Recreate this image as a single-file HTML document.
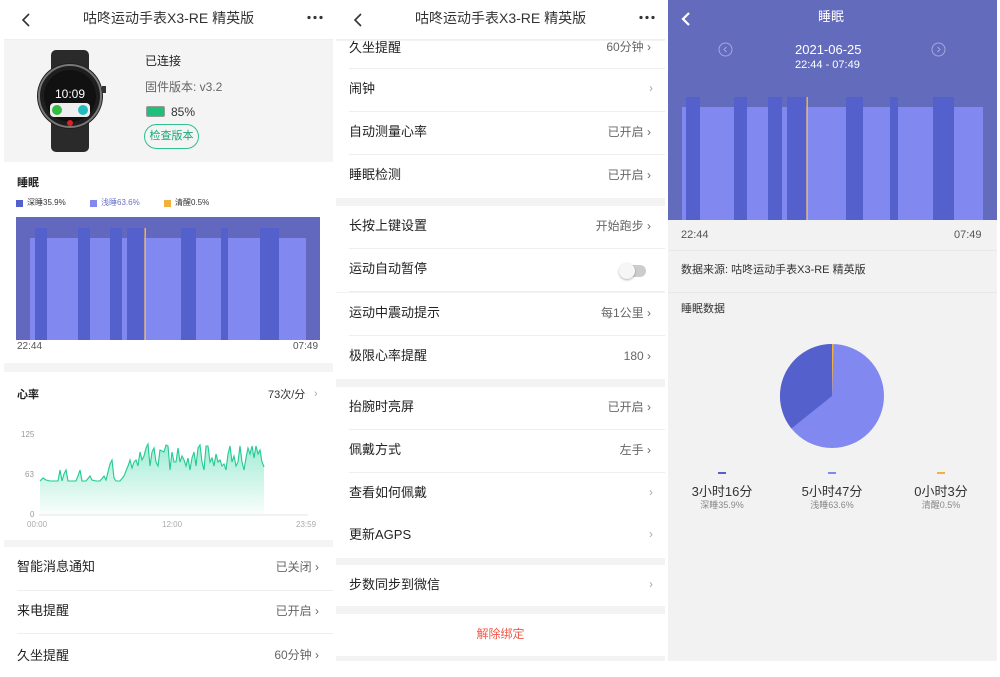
<!DOCTYPE html>
<html><head><meta charset="utf-8"><style>
*{margin:0;padding:0;box-sizing:border-box}
body{width:1000px;height:661px;overflow:hidden;background:#fff;font-family:"Liberation Sans","Noto Sans CJK SC",sans-serif;color:#222;position:relative}
.a{position:absolute}
.t{position:absolute;white-space:nowrap;line-height:1}
.row{position:absolute;height:43px;background:#fff}
.row .l{position:absolute;left:13px;top:13px;font-size:13px;color:#222;line-height:1}
.row .r{position:absolute;right:14px;top:14px;font-size:12px;color:#666;line-height:1}
.row .c{position:absolute;right:12px;top:13px;font-size:12px;color:#aaa;line-height:1}
.row .ln{position:absolute;left:13px;right:0;bottom:0;height:1px;background:#eee}
</style></head><body>

<!-- LEFT PANEL -->
<div class="a" style="left:4px;top:0;width:329px;height:661px;background:#f4f4f4"></div>
<div class="a" style="left:4px;top:0;width:329px;height:40px;background:#fff;border-bottom:1px solid #eee"></div>
<svg class="a" style="left:20px;top:12px" width="12" height="16"><path d="M9 2 L3 8 L9 14" fill="none" stroke="#333" stroke-width="1.6"/></svg>
<div class="t" style="left:83px;top:11px;font-size:14px;color:#333">咕咚运动手表X3-RE 精英版</div>
<svg class="a" style="left:307px;top:15px" width="16" height="5"><circle cx="2" cy="2.5" r="1.6" fill="#333"/><circle cx="8" cy="2.5" r="1.6" fill="#333"/><circle cx="14" cy="2.5" r="1.6" fill="#333"/></svg>
<!-- watch -->
<svg class="a" style="left:30px;top:48px" width="80" height="106">
<rect x="21" y="2" width="38" height="102" rx="5" fill="#2a2a2a"/>
<circle cx="40" cy="48" r="33" fill="#1e1e1e"/>
<circle cx="40" cy="48" r="31" fill="none" stroke="#777" stroke-width="2"/>
<circle cx="40" cy="48" r="26" fill="#111"/>
<rect x="72" y="38" width="4" height="7" fill="#333"/>
<text x="40" y="50" font-size="12" fill="#fff" text-anchor="middle" font-family="Liberation Sans">10:09</text>
<rect x="20" y="55" width="40" height="14" rx="4" fill="#eee"/>
<circle cx="27" cy="62" r="5" fill="#3b4" /><circle cx="53" cy="62" r="5" fill="#2bb"/>
<circle cx="40" cy="75" r="3" fill="#d22"/>
</svg>
<div class="t" style="left:145px;top:55px;font-size:12px;color:#222">已连接</div>
<div class="t" style="left:145px;top:81px;font-size:12px;color:#666">固件版本: v3.2</div>
<div class="a" style="left:146px;top:106px;width:19px;height:11px;border:1px solid #999;border-radius:2px;background:#1fc07a"></div>
<div class="t" style="left:171px;top:106px;font-size:12px;color:#333">85%</div>
<div class="a" style="left:144px;top:124px;width:55px;height:25px;border:1px solid #2fc08d;border-radius:13px;font-size:11px;color:#1aa977;text-align:center;line-height:23px">检查版本</div>
<!-- sleep card -->
<div class="a" style="left:4px;top:162px;width:329px;height:201px;background:#fff"></div>
<div class="t" style="left:17px;top:178px;font-size:11px;font-weight:bold">睡眠</div>
<div class="a" style="left:16px;top:200px;width:7px;height:7px;background:#5461cc"></div>
<div class="t" style="left:27px;top:199px;font-size:8px;color:#333">深睡35.9%</div>
<div class="a" style="left:90px;top:200px;width:7px;height:7px;background:#8189f0"></div>
<div class="t" style="left:101px;top:199px;font-size:8px;color:#6a70c8">浅睡63.6%</div>
<div class="a" style="left:164px;top:200px;width:7px;height:7px;background:#f0b23c"></div>
<div class="t" style="left:175px;top:199px;font-size:8px;color:#333">清醒0.5%</div>
<svg class="a" style="left:16px;top:217px" width="304" height="123">
<rect width="304" height="123" fill="#6368bf"/>
<rect x="14" y="21" width="276" height="102" fill="#8189f0"/>
<g fill="#5461cc"><rect x="19" y="11" width="12" height="112"/><rect x="62" y="11" width="12" height="112"/><rect x="94" y="11" width="12" height="112"/><rect x="111" y="11" width="17" height="112"/><rect x="165" y="11" width="15" height="112"/><rect x="205" y="11" width="7" height="112"/><rect x="244" y="11" width="19" height="112"/></g>
<rect x="128.5" y="11" width="1.5" height="112" fill="#f0b23c"/>
</svg>
<div class="t" style="left:17px;top:342px;font-size:10px;color:#555">22:44</div>
<div class="t" style="left:293px;top:342px;font-size:10px;color:#555">07:49</div>
<!-- heart card -->
<div class="a" style="left:4px;top:372px;width:329px;height:168px;background:#fff"></div>
<div class="t" style="left:17px;top:390px;font-size:11px;font-weight:bold">心率</div>
<div class="t" style="left:268px;top:390px;font-size:11px;color:#333">73次/分</div>
<div class="t" style="left:314px;top:389px;font-size:11px;color:#aaa">›</div>
<div class="t" style="left:21px;top:431px;font-size:8px;color:#999">125</div>
<div class="t" style="left:25px;top:471px;font-size:8px;color:#999">63</div>
<div class="t" style="left:30px;top:511px;font-size:8px;color:#999">0</div>
<div class="t" style="left:27px;top:521px;font-size:8px;color:#aaa">00:00</div>
<div class="t" style="left:162px;top:521px;font-size:8px;color:#aaa">12:00</div>
<div class="t" style="left:296px;top:521px;font-size:8px;color:#aaa">23:59</div>
<svg class="a" style="left:0;top:0" width="333" height="540">
<defs><linearGradient id="g" x1="0" y1="0" x2="0" y2="1"><stop offset="0" stop-color="#2fd4a0" stop-opacity=".45"/><stop offset="1" stop-color="#2fd4a0" stop-opacity=".03"/></linearGradient></defs>
<line x1="39" y1="515" x2="308" y2="515" stroke="#e5e5e5"/>
<path d="M40 481 L43 478 L46 480 L50 481 L55 481 L58 481 L60 470 L62 481 L64 474 L66 470 L68 481 L72 481 L76 481 L78 476 L80 470 L82 481 L86 481 L90 476 L92 480 L96 481 L100 481 L104 476 L106 480 L110 464 L112 460 L114 478 L116 481 L120 481 L124 476 L128 466 L130 460 L132 468 L134 462 L136 460 L138 466 L140 452 L142 460 L144 456 L146 448 L148 444 L150 466 L152 452 L154 448 L156 462 L158 466 L160 450 L164 452 L166 445 L168 446 L170 470 L172 452 L174 462 L176 462 L178 448 L180 462 L182 456 L184 460 L186 466 L188 458 L190 470 L192 458 L194 452 L196 466 L198 448 L200 445 L202 462 L204 470 L206 446 L208 446 L210 462 L212 458 L214 466 L216 454 L218 462 L220 460 L222 466 L224 464 L226 470 L228 454 L230 446 L232 462 L234 456 L236 466 L238 462 L240 446 L242 462 L244 470 L246 458 L248 448 L250 454 L252 446 L254 458 L256 446 L258 454 L260 450 L262 462 L264 467" fill="none" stroke="#1ec98f" stroke-width="1.1"/>
<path d="M40 481 L43 478 L46 480 L50 481 L55 481 L58 481 L60 470 L62 481 L64 474 L66 470 L68 481 L72 481 L76 481 L78 476 L80 470 L82 481 L86 481 L90 476 L92 480 L96 481 L100 481 L104 476 L106 480 L110 464 L112 460 L114 478 L116 481 L120 481 L124 476 L128 466 L130 460 L132 468 L134 462 L136 460 L138 466 L140 452 L142 460 L144 456 L146 448 L148 444 L150 466 L152 452 L154 448 L156 462 L158 466 L160 450 L164 452 L166 445 L168 446 L170 470 L172 452 L174 462 L176 462 L178 448 L180 462 L182 456 L184 460 L186 466 L188 458 L190 470 L192 458 L194 452 L196 466 L198 448 L200 445 L202 462 L204 470 L206 446 L208 446 L210 462 L212 458 L214 466 L216 454 L218 462 L220 460 L222 466 L224 464 L226 470 L228 454 L230 446 L232 462 L234 456 L236 466 L238 462 L240 446 L242 462 L244 470 L246 458 L248 448 L250 454 L252 446 L254 458 L256 446 L258 454 L260 450 L262 462 L264 467 L264 514 L40 514 Z" fill="url(#g)"/>
</svg>
<!-- list -->
<div class="row" style="left:4px;top:547px;width:329px;height:44px"><span class="l">智能消息通知</span><span class="r">已关闭 ›</span><span class="ln"></span></div>
<div class="row" style="left:4px;top:591px;width:329px"><span class="l">来电提醒</span><span class="r">已开启 ›</span><span class="ln"></span></div>
<div class="row" style="left:4px;top:634px;width:329px"><span class="l" style="top:15px">久坐提醒</span><span class="r" style="top:15px">60分钟 ›</span></div>

<!-- MIDDLE PANEL -->
<div class="a" style="left:336px;top:0;width:329px;height:661px;background:#f3f3f3"></div>
<div class="a" style="left:336px;top:0;width:329px;height:40px;background:#fff;border-bottom:1px solid #eee"></div>
<svg class="a" style="left:352px;top:12px" width="12" height="16"><path d="M9 2 L3 8 L9 14" fill="none" stroke="#333" stroke-width="1.6"/></svg>
<div class="t" style="left:415px;top:11px;font-size:14px;color:#333">咕咚运动手表X3-RE 精英版</div>
<svg class="a" style="left:639px;top:15px" width="16" height="5"><circle cx="2" cy="2.5" r="1.6" fill="#333"/><circle cx="8" cy="2.5" r="1.6" fill="#333"/><circle cx="14" cy="2.5" r="1.6" fill="#333"/></svg>
<div class="row" style="left:336px;top:41px;width:329px;height:28px"><span class="l" style="top:0">久坐提醒</span><span class="r" style="top:0">60分钟 ›</span><span class="ln"></span></div>
<div class="row" style="left:336px;top:69px;width:329px"><span class="l">闹钟</span><span class="c">›</span><span class="ln"></span></div>
<div class="row" style="left:336px;top:112px;width:329px"><span class="l">自动测量心率</span><span class="r">已开启 ›</span><span class="ln"></span></div>
<div class="row" style="left:336px;top:155px;width:329px"><span class="l">睡眠检测</span><span class="r">已开启 ›</span></div>
<div class="row" style="left:336px;top:206px;width:329px"><span class="l">长按上键设置</span><span class="r">开始跑步 ›</span><span class="ln"></span></div>
<div class="row" style="left:336px;top:249px;width:329px"><span class="l">运动自动暂停</span><span class="ln"></span>
<div class="a" style="left:284px;top:16px;width:26px;height:12px;border-radius:6px;background:#ccc"></div><div class="a" style="left:283px;top:14px;width:16px;height:16px;border-radius:8px;background:#f6f6f6;box-shadow:0 1px 2px rgba(0,0,0,.3)"></div></div>
<div class="row" style="left:336px;top:293px;width:329px"><span class="l">运动中震动提示</span><span class="r">每1公里 ›</span><span class="ln"></span></div>
<div class="row" style="left:336px;top:336px;width:329px"><span class="l">极限心率提醒</span><span class="r">180 ›</span></div>
<div class="row" style="left:336px;top:387px;width:329px"><span class="l">抬腕时亮屏</span><span class="r">已开启 ›</span><span class="ln"></span></div>
<div class="row" style="left:336px;top:430px;width:329px"><span class="l">佩戴方式</span><span class="r">左手 ›</span><span class="ln"></span></div>
<div class="row" style="left:336px;top:473px;width:329px"><span class="l">查看如何佩戴</span><span class="c">›</span><span class="ln"></span></div>
<div class="row" style="left:336px;top:515px;width:329px"><span class="l">更新AGPS</span><span class="c">›</span></div>
<div class="row" style="left:336px;top:565px;width:329px;height:41px"><span class="l">步数同步到微信</span><span class="c">›</span></div>
<div class="row" style="left:336px;top:614px;width:329px;height:42px"><span class="t" style="left:0;width:329px;text-align:center;top:14px;font-size:12px;color:#f05a4a">解除绑定</span></div>

<!-- RIGHT PANEL -->
<div class="a" style="left:668px;top:0;width:329px;height:661px;background:#f2f2f2"></div>
<div class="a" style="left:668px;top:0;width:329px;height:220px;background:#636bbd"></div>
<svg class="a" style="left:680px;top:11px" width="12" height="16"><path d="M9 2 L3 8 L9 14" fill="none" stroke="#fff" stroke-width="2.2"/></svg>
<div class="t" style="left:818px;top:10px;font-size:13px;color:#fff">睡眠</div>
<svg class="a" style="left:718px;top:42px" width="15" height="15"><circle cx="7.5" cy="7.5" r="6.5" fill="none" stroke="#a3a8dc"/><path d="M8.5 5 L6 7.5 L8.5 10" fill="none" stroke="#a3a8dc"/></svg>
<svg class="a" style="left:931px;top:42px" width="15" height="15"><circle cx="7.5" cy="7.5" r="6.5" fill="none" stroke="#a3a8dc"/><path d="M6.5 5 L9 7.5 L6.5 10" fill="none" stroke="#a3a8dc"/></svg>
<div class="t" style="left:795px;top:43px;font-size:13px;color:#fff">2021-06-25</div>
<div class="t" style="left:795px;top:60px;font-size:11px;color:#fff">22:44 - 07:49</div>
<svg class="a" style="left:668px;top:97px" width="329" height="123">
<rect x="14" y="10" width="301" height="113" fill="#8189f0"/>
<g fill="#5461cc"><rect x="18" y="0" width="14" height="123"/><rect x="66" y="0" width="13" height="123"/><rect x="100" y="0" width="14" height="123"/><rect x="119" y="0" width="19" height="123"/><rect x="178" y="0" width="17" height="123"/><rect x="222" y="0" width="8" height="123"/><rect x="265" y="0" width="21" height="123"/></g>
<rect x="138.5" y="0" width="1.5" height="123" fill="#f0b23c"/>
</svg>
<div class="t" style="left:681px;top:230px;font-size:11px;color:#555">22:44</div>
<div class="t" style="left:954px;top:230px;font-size:11px;color:#555">07:49</div>
<div class="a" style="left:668px;top:250px;width:329px;height:1px;background:#e8e8e8"></div>
<div class="t" style="left:681px;top:265px;font-size:11px;color:#333">数据来源: 咕咚运动手表X3-RE 精英版</div>
<div class="a" style="left:668px;top:292px;width:329px;height:1px;background:#e8e8e8"></div>
<div class="t" style="left:681px;top:304px;font-size:11px;color:#333">睡眠数据</div>
<svg class="a" style="left:780px;top:344px" width="104" height="104">
<circle cx="52" cy="52" r="52" fill="#8189f0"/>
<path d="M52 52 L52 0 A52 52 0 0 0 11.4 84.5 Z" fill="#5461cc"/>
<path d="M52 52 L52 0 A52 52 0 0 1 53.6 0 Z" fill="#f0b23c"/>
</svg>
<div class="a" style="left:718px;top:472px;width:8px;height:2px;background:#5461cc"></div>
<div class="a" style="left:828px;top:472px;width:8px;height:2px;background:#8189f0"></div>
<div class="a" style="left:937px;top:472px;width:8px;height:2px;background:#f0b23c"></div>
<div class="t" style="left:672px;top:485px;width:100px;text-align:center;font-size:13px;color:#333">3小时16分</div>
<div class="t" style="left:782px;top:485px;width:100px;text-align:center;font-size:13px;color:#333">5小时47分</div>
<div class="t" style="left:891px;top:485px;width:100px;text-align:center;font-size:13px;color:#333">0小时3分</div>
<div class="t" style="left:672px;top:501px;width:100px;text-align:center;font-size:9px;color:#888">深睡35.9%</div>
<div class="t" style="left:782px;top:501px;width:100px;text-align:center;font-size:9px;color:#888">浅睡63.6%</div>
<div class="t" style="left:891px;top:501px;width:100px;text-align:center;font-size:9px;color:#888">清醒0.5%</div>
</body></html>
